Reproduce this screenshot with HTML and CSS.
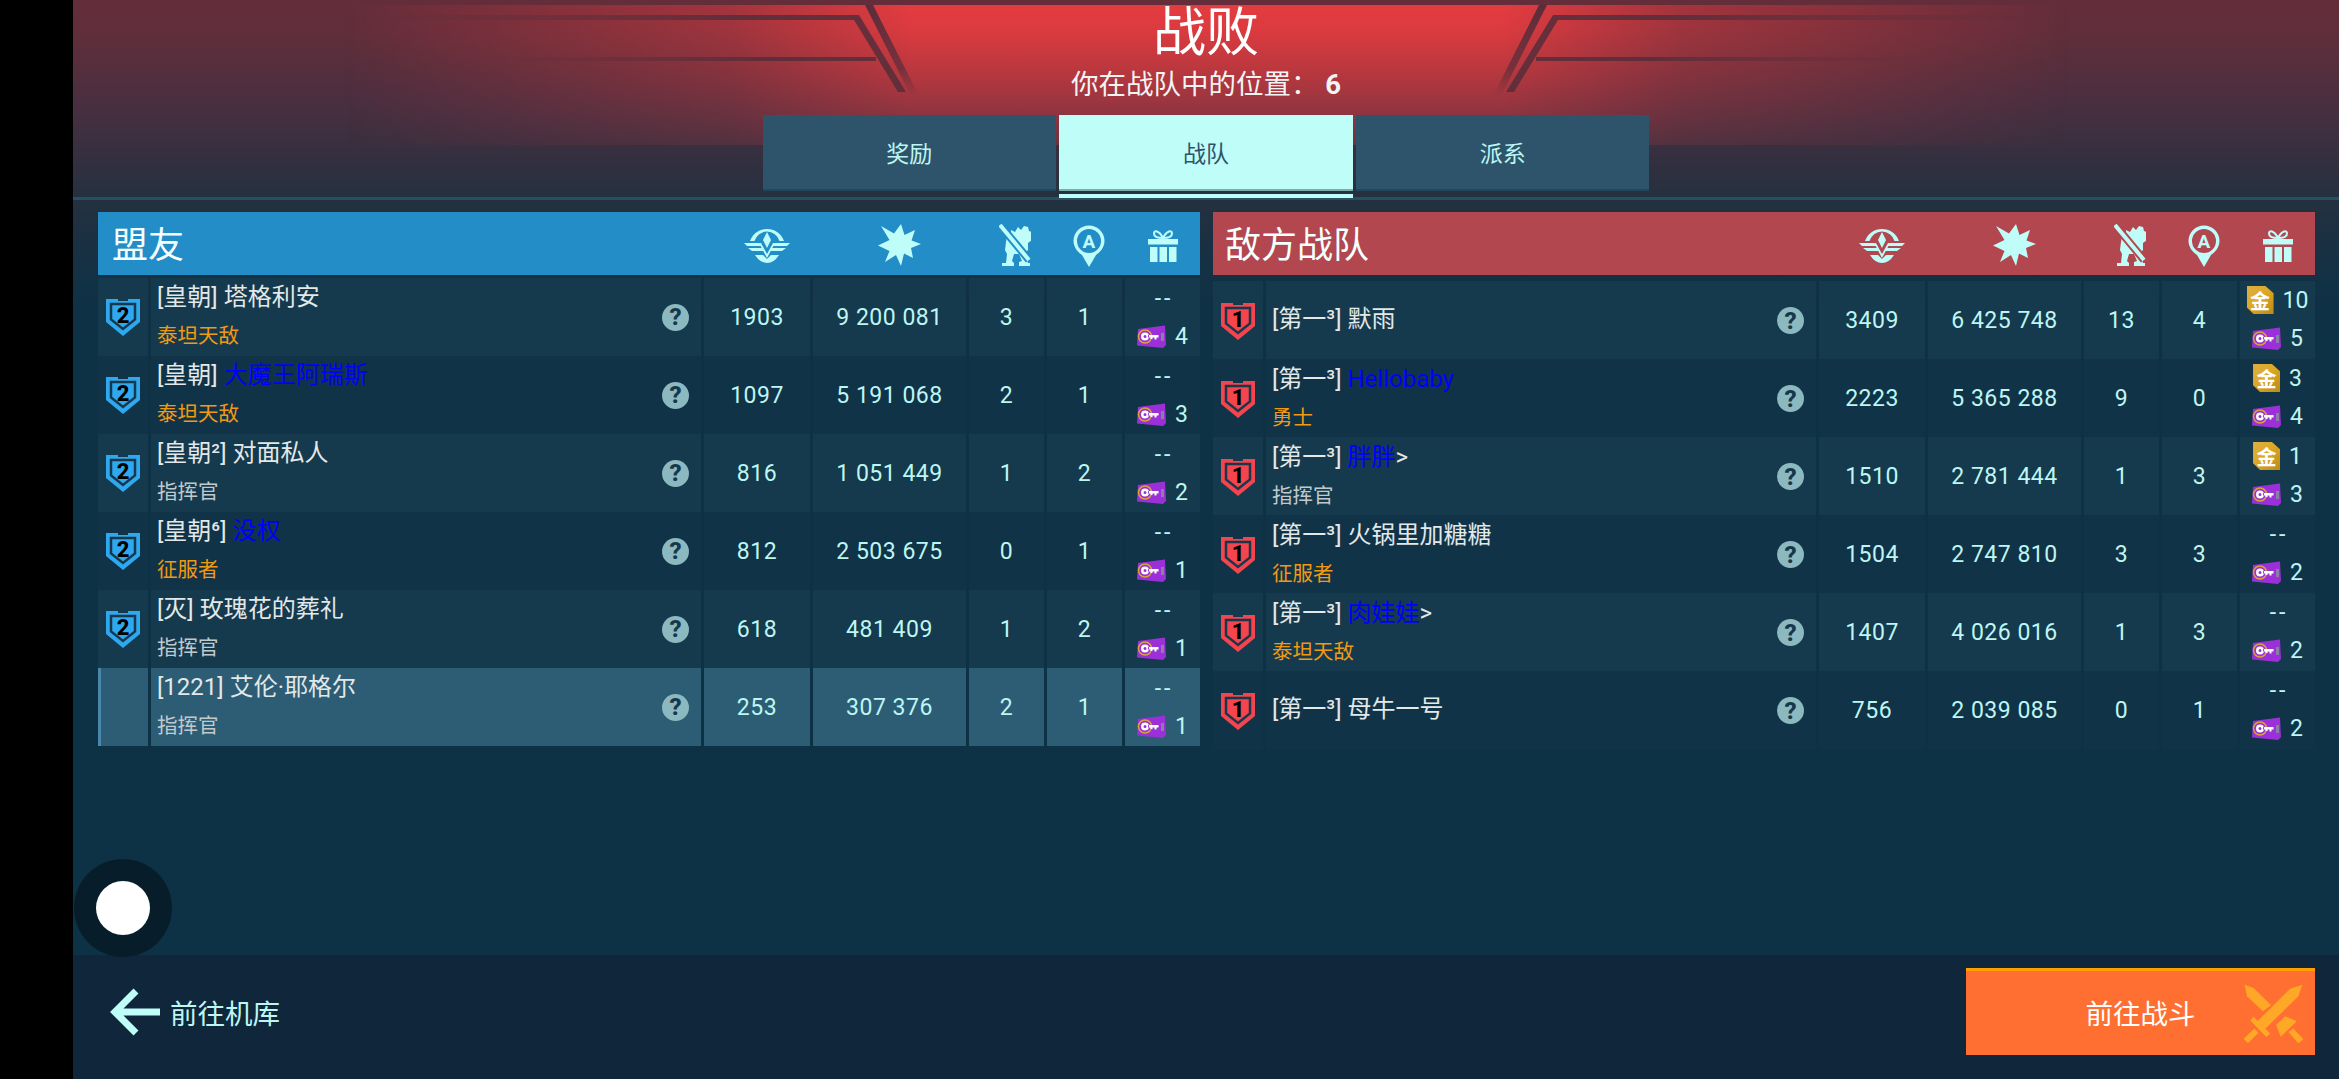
FILE: index.html
```html
<!DOCTYPE html>
<html lang="zh">
<head>
<meta charset="utf-8">
<title>战败</title>
<link rel="stylesheet" href="styles.css">
</head>
<body>
<svg class="defs" width="0" height="0" aria-hidden="true">
  <defs>
    <symbol id="i-emblem" viewBox="0 0 46 36">
      <path d="M6 14A18 18 0 0 1 40 14H35.500A13 13 0 0 0 10.500 14Z"/>
      <path d="M23 5L27 13L23 21L19 13Z"/>
      <path d="M0 16H15L18 19H3Z"/><path d="M46 16H31L28 19H43Z"/>
      <path d="M4 21H18L20 24H8Z"/><path d="M42 21H28L26 24H38Z"/>
      <path d="M17 16L23 27L29 16L31 16L23 31L15 16Z"/>
      <path d="M11 28H19L23 32L27 28H35Q30 36 23 36Q16 36 11 28Z"/>
    </symbol>
    <symbol id="i-star" viewBox="0 0 43 42">
      <path d="M23 0L26.500 11L37 6L33.500 16.500L43 20L33 24L35 34L26 29.500L23 42L18 31L7 38L11.500 27L0 21.500L11.500 16L3 2L16 9.500Z"/>
    </symbol>
    <symbol id="i-mech" viewBox="0 0 32 42">
      <path d="M12 6L16 8L19 3L22 6L25 2L29 3L30 7L33 8V16L29 19V26L26 29L28 36L29 39H31V42H20V38L23 37L20 30H15L13 37L15 39V42H3V39H7L8 30L6 26L7 18L8 12L12 10Z"/>
      <path class="slash-gap" d="M1 1L30 36"/>
      <path class="slash" d="M1 1L30 36"/>
    </symbol>
    <symbol id="i-pin" viewBox="0 0 34 43">
      <path d="M17 1.500A15.500 15.500 0 0 1 32.500 17C32.500 24 27 29 24 31L17 43L10 31C7 29 1.500 24 1.500 17A15.500 15.500 0 0 1 17 1.500ZM17 5A12 12 0 1 0 17 29A12 12 0 1 0 17 5Z" fill-rule="evenodd"/>
      <text x="17" y="23.500" class="pin-a">A</text>
    </symbol>
    <symbol id="i-gift" viewBox="0 0 30 33">
      <path class="bow" d="M15 9C10 9 6 8 6 4.500C6 1 11 1 15 9C19 1 24 1 24 4.500C24 8 20 9 15 9Z"/>
      <rect x="0" y="10" width="30" height="5.500"/>
      <rect x="2" y="18" width="7.500" height="15"/>
      <rect x="11.500" y="18" width="7.500" height="15"/>
      <rect x="21" y="18" width="7.500" height="15"/>
    </symbol>
    <symbol id="i-key" viewBox="0 0 29 23">
      <path class="key-card" d="M1 4L28 0.500L29 20L26 23L0 20.500Z"/>
      <circle class="key-ring" cx="8" cy="11.500" r="6.500"/>
      <path class="key-blade" d="M8 7.500A4 4 0 1 1 8 15.500A4 4 0 0 1 8 7.500ZM8 10A1.500 1.500 0 1 0 8 13A1.500 1.500 0 0 0 8 10Z M11 10H21.500V12.500H19.500V14.500H17.500V12.500H15.500V14H13.500V12.500H11Z" fill-rule="evenodd"/>
      <rect class="key-strip" x="24" y="8" width="3" height="8"/>
    </symbol>
    <symbol id="i-shield" viewBox="0 0 36 38">
      <path class="sh-outer" d="M1 1H13V3H23V1H35V24L18 38L1 24Z"/>
      <path class="sh-line" d="M6 6H30V21.500L18 31L6 21.500Z"/>
    </symbol>
  </defs>
</svg>

<div class="app">
  <aside class="blackbar"></aside>
  <main class="main">
    <header class="top">
      <svg class="banner" viewBox="0 0 2266 197" preserveAspectRatio="none" aria-hidden="true">
        <defs>
          <linearGradient id="redH" x1="0" x2="1" y1="0" y2="0">
            <stop offset="0.12" stop-color="#e63c40" stop-opacity="0"/>
            <stop offset="0.29" stop-color="#e63c40" stop-opacity=".5"/>
            <stop offset="0.37" stop-color="#e63c40"/>
            <stop offset="0.63" stop-color="#e63c40"/>
            <stop offset="0.71" stop-color="#e63c40" stop-opacity=".5"/>
            <stop offset="0.88" stop-color="#e63c40" stop-opacity="0"/>
          </linearGradient>
          <linearGradient id="fadeV" x1="0" x2="0" y1="0" y2="1">
            <stop offset="0" stop-color="#fff"/>
            <stop offset="0.15" stop-color="#fff" stop-opacity=".92"/>
            <stop offset="1" stop-color="#fff" stop-opacity="0"/>
          </linearGradient>
          <mask id="fadeMask"><rect width="2266" height="197" fill="url(#fadeV)"/></mask>
          <linearGradient id="lineL" x1="0" x2="1" y1="0" y2="0">
            <stop offset="0" stop-color="#552d3a" stop-opacity="0"/>
            <stop offset="0.7" stop-color="#552d3a" stop-opacity=".85"/>
          </linearGradient>
          <linearGradient id="lineR" x1="1" x2="0" y1="0" y2="0">
            <stop offset="0" stop-color="#552d3a" stop-opacity="0"/>
            <stop offset="0.7" stop-color="#552d3a" stop-opacity=".85"/>
          </linearGradient>
          <linearGradient id="diagFade" x1="0" x2="0" y1="0" y2="1">
            <stop offset="0" stop-color="#5a2d3a"/>
            <stop offset="0.7" stop-color="#5a2d3a" stop-opacity=".7"/>
            <stop offset="1" stop-color="#5a2d3a" stop-opacity="0"/>
          </linearGradient>
        </defs>
        <rect y="5" width="2266" height="140" fill="url(#redH)" mask="url(#fadeMask)"/>
        <path d="M280 15H786L833 92H825L781 20H280Z" fill="url(#lineL)"/>
        <path d="M420 57H803V61H420Z" fill="url(#lineL)"/>
        <path d="M792 5H800L846 96H838Z" fill="url(#diagFade)"/>
        <path d="M1986 15H1480L1433 92H1441L1485 20H1986Z" fill="url(#lineR)"/>
        <path d="M1846 57H1463V61H1846Z" fill="url(#lineR)"/>
        <path d="M1474 5H1466L1420 96H1428Z" fill="url(#diagFade)"/>
      </svg>
      <h1 class="title">战败</h1>
      <p class="subtitle">你在战队中的位置： <b class="place">6</b></p>
      <nav class="tabs">
        <div class="tab">奖励</div>
        <div class="tab tab-active">战队</div>
        <div class="tab">派系</div>
      </nav>
    </header>

    <section class="board">
      <div class="team team-ally">
        <div class="thead">
          <div class="thead-name">盟友</div>
          <div class="hc hc-1"><svg class="ic-emblem"><use href="#i-emblem"/></svg></div>
          <div class="hc hc-2"><svg class="ic-star"><use href="#i-star"/></svg></div>
          <div class="hc hc-3"><svg class="ic-mech"><use href="#i-mech"/></svg></div>
          <div class="hc hc-4"><svg class="ic-pin"><use href="#i-pin"/></svg></div>
          <div class="hc"><svg class="ic-gift"><use href="#i-gift"/></svg></div>
        </div>

        <div class="row">
          <div class="cell badge"><svg class="shield"><use href="#i-shield"/></svg><span class="rank">2</span></div>
          <div class="cell who"><div class="names"><div class="name">[皇朝] 塔格利安</div><div class="sub gold-t">泰坦天敌</div></div><span class="q">?</span></div>
          <div class="cell">1903</div><div class="cell">9 200 081</div><div class="cell">3</div><div class="cell">1</div>
          <div class="cell gifts"><div class="gl dash">--</div><div class="gl"><svg class="key"><use href="#i-key"/></svg>4</div></div>
        </div>
        <div class="row">
          <div class="cell badge"><svg class="shield"><use href="#i-shield"/></svg><span class="rank">2</span></div>
          <div class="cell who"><div class="names"><div class="name">[皇朝] <span class="blue">大魔王阿瑞斯</span></div><div class="sub gold-t">泰坦天敌</div></div><span class="q">?</span></div>
          <div class="cell">1097</div><div class="cell">5 191 068</div><div class="cell">2</div><div class="cell">1</div>
          <div class="cell gifts"><div class="gl dash">--</div><div class="gl"><svg class="key"><use href="#i-key"/></svg>3</div></div>
        </div>
        <div class="row">
          <div class="cell badge"><svg class="shield"><use href="#i-shield"/></svg><span class="rank">2</span></div>
          <div class="cell who"><div class="names"><div class="name">[皇朝²] 对面私人</div><div class="sub">指挥官</div></div><span class="q">?</span></div>
          <div class="cell">816</div><div class="cell">1 051 449</div><div class="cell">1</div><div class="cell">2</div>
          <div class="cell gifts"><div class="gl dash">--</div><div class="gl"><svg class="key"><use href="#i-key"/></svg>2</div></div>
        </div>
        <div class="row">
          <div class="cell badge"><svg class="shield"><use href="#i-shield"/></svg><span class="rank">2</span></div>
          <div class="cell who"><div class="names"><div class="name">[皇朝⁶] <span class="blue">没权</span></div><div class="sub gold-t">征服者</div></div><span class="q">?</span></div>
          <div class="cell">812</div><div class="cell">2 503 675</div><div class="cell">0</div><div class="cell">1</div>
          <div class="cell gifts"><div class="gl dash">--</div><div class="gl"><svg class="key"><use href="#i-key"/></svg>1</div></div>
        </div>
        <div class="row">
          <div class="cell badge"><svg class="shield"><use href="#i-shield"/></svg><span class="rank">2</span></div>
          <div class="cell who"><div class="names"><div class="name">[灭] 玫瑰花的葬礼</div><div class="sub">指挥官</div></div><span class="q">?</span></div>
          <div class="cell">618</div><div class="cell">481 409</div><div class="cell">1</div><div class="cell">2</div>
          <div class="cell gifts"><div class="gl dash">--</div><div class="gl"><svg class="key"><use href="#i-key"/></svg>1</div></div>
        </div>
        <div class="row row-me">
          <div class="cell badge"></div>
          <div class="cell who"><div class="names"><div class="name">[1221] 艾伦·耶格尔</div><div class="sub">指挥官</div></div><span class="q">?</span></div>
          <div class="cell">253</div><div class="cell">307 376</div><div class="cell">2</div><div class="cell">1</div>
          <div class="cell gifts"><div class="gl dash">--</div><div class="gl"><svg class="key"><use href="#i-key"/></svg>1</div></div>
        </div>
      </div>

      <div class="team team-enemy">
        <div class="thead">
          <div class="thead-name">敌方战队</div>
          <div class="hc hc-1"><svg class="ic-emblem"><use href="#i-emblem"/></svg></div>
          <div class="hc hc-2"><svg class="ic-star"><use href="#i-star"/></svg></div>
          <div class="hc hc-3"><svg class="ic-mech"><use href="#i-mech"/></svg></div>
          <div class="hc hc-4"><svg class="ic-pin"><use href="#i-pin"/></svg></div>
          <div class="hc"><svg class="ic-gift"><use href="#i-gift"/></svg></div>
        </div>

        <div class="row">
          <div class="cell badge"><svg class="shield"><use href="#i-shield"/></svg><span class="rank">1</span></div>
          <div class="cell who"><div class="names"><div class="name">[第一³] 默雨</div></div><span class="q">?</span></div>
          <div class="cell">3409</div><div class="cell">6 425 748</div><div class="cell">13</div><div class="cell">4</div>
          <div class="cell gifts"><div class="gl"><span class="coin">金</span>10</div><div class="gl"><svg class="key"><use href="#i-key"/></svg>5</div></div>
        </div>
        <div class="row">
          <div class="cell badge"><svg class="shield"><use href="#i-shield"/></svg><span class="rank">1</span></div>
          <div class="cell who"><div class="names"><div class="name">[第一³] <span class="blue">Hellobaby</span></div><div class="sub gold-t">勇士</div></div><span class="q">?</span></div>
          <div class="cell">2223</div><div class="cell">5 365 288</div><div class="cell">9</div><div class="cell">0</div>
          <div class="cell gifts"><div class="gl"><span class="coin">金</span>3</div><div class="gl"><svg class="key"><use href="#i-key"/></svg>4</div></div>
        </div>
        <div class="row">
          <div class="cell badge"><svg class="shield"><use href="#i-shield"/></svg><span class="rank">1</span></div>
          <div class="cell who"><div class="names"><div class="name">[第一³] <span class="blue">胖胖</span>&gt;</div><div class="sub">指挥官</div></div><span class="q">?</span></div>
          <div class="cell">1510</div><div class="cell">2 781 444</div><div class="cell">1</div><div class="cell">3</div>
          <div class="cell gifts"><div class="gl"><span class="coin">金</span>1</div><div class="gl"><svg class="key"><use href="#i-key"/></svg>3</div></div>
        </div>
        <div class="row">
          <div class="cell badge"><svg class="shield"><use href="#i-shield"/></svg><span class="rank">1</span></div>
          <div class="cell who"><div class="names"><div class="name">[第一³] 火锅里加糖糖</div><div class="sub gold-t">征服者</div></div><span class="q">?</span></div>
          <div class="cell">1504</div><div class="cell">2 747 810</div><div class="cell">3</div><div class="cell">3</div>
          <div class="cell gifts"><div class="gl dash">--</div><div class="gl"><svg class="key"><use href="#i-key"/></svg>2</div></div>
        </div>
        <div class="row">
          <div class="cell badge"><svg class="shield"><use href="#i-shield"/></svg><span class="rank">1</span></div>
          <div class="cell who"><div class="names"><div class="name">[第一³] <span class="blue">肉娃娃</span>&gt;</div><div class="sub gold-t">泰坦天敌</div></div><span class="q">?</span></div>
          <div class="cell">1407</div><div class="cell">4 026 016</div><div class="cell">1</div><div class="cell">3</div>
          <div class="cell gifts"><div class="gl dash">--</div><div class="gl"><svg class="key"><use href="#i-key"/></svg>2</div></div>
        </div>
        <div class="row">
          <div class="cell badge"><svg class="shield"><use href="#i-shield"/></svg><span class="rank">1</span></div>
          <div class="cell who"><div class="names"><div class="name">[第一³] 母牛一号</div></div><span class="q">?</span></div>
          <div class="cell">756</div><div class="cell">2 039 085</div><div class="cell">0</div><div class="cell">1</div>
          <div class="cell gifts"><div class="gl dash">--</div><div class="gl"><svg class="key"><use href="#i-key"/></svg>2</div></div>
        </div>
      </div>
    </section>

    <footer class="foot">
      <div class="back">
        <svg class="arrow" viewBox="0 0 50 48" aria-hidden="true"><path d="M26 3L5 24L26 45M5 24H50"/></svg>
        <span>前往机库</span>
      </div>
      <button class="go">
        <span class="go-label">前往战斗</span>
        <svg class="swords" viewBox="900 125 190 190" aria-hidden="true">
          <path d="M908 130L935 140L988 192L963 210L915 165Z"/>
          <path d="M1082 130L1045 142L945 242L968 265L1070 165Z"/>
          <path d="M925 238L935 227L985 277L973 288Z"/>
          <path d="M905 293L937 262L950 275L918 307Z"/>
          <path d="M1003 252L1030 225L1065 240L1017 288Z"/>
          <path d="M1040 273L1055 262L1085 295L1070 307Z"/>
        </svg>
      </button>
    </footer>

    <div class="joystick"><div class="joy-dot"></div></div>
  </main>
</div>
</body>
</html>
```
FILE: styles.css
```css
* { box-sizing: border-box; }
html, body { margin: 0; height: 100%; }
body {
  background: #000;
  font-family: "Roboto", "Noto Sans CJK SC", sans-serif;
  color: #bdf6f2;
  overflow: hidden;
}
.defs { position: absolute; }
.app { display: flex; width: 2339px; height: 1079px; }
.blackbar { width: 73px; flex: none; background: #000; }
.main {
  flex: 1;
  display: flex;
  flex-direction: column;
  position: relative;
  min-width: 0;
  background: #0d3145;
}

/* top banner */
.top {
  position: relative;
  height: 200px;
  flex: none;
  display: flex;
  flex-direction: column;
  align-items: center;
  border-bottom: 3px solid #24506a;
  background: linear-gradient(180deg, #652d3a 0%, #5f2e3b 20%, #452f40 58%, #25303f 100%);
}
.banner { position: absolute; left: 0; top: 0; width: 100%; height: 197px; }
.title {
  position: relative;
  margin: 0;
  padding-top: 3px;
  height: 60px;
  font-size: 53px;
  line-height: 60px;
  font-weight: 400;
  color: #fff;
}
.subtitle {
  position: relative;
  margin: 6px 0 0;
  height: 38px;
  font-size: 27.500px;
  line-height: 38px;
  color: #f2f4f4;
  white-space: pre;
}
.place { font-weight: 700; }
.tabs {
  position: relative;
  display: grid;
  grid-template-columns: repeat(3, 1fr);
  gap: 3px;
  width: 887px;
  height: 76px;
  margin-top: 11px;
}
.tab {
  display: flex;
  align-items: center;
  justify-content: center;
  background: #2e546c;
  border-bottom: 2px solid #23455e;
  font-size: 23px;
  color: #bdf6f2;
}
.tab-active {
  position: relative;
  background: #bffdf9;
  border-bottom-color: #7fa9ab;
  color: #2e546c;
}
.tab-active::after {
  content: "";
  position: absolute;
  left: 0;
  right: 0;
  bottom: -9px;
  height: 4px;
  background: #bffdf9;
}

/* tables */
.board {
  flex: 1;
  display: flex;
  gap: 13px;
  padding: 12px 24px 0 25px;
  background: linear-gradient(180deg, #24303f 0, #123145 80px, #0d3145 140px);
}
.team { width: 1102px; display: flex; flex-direction: column; gap: 3px; }
.team-ally { --sh: #2ea8ee; }
.team-enemy { --sh: #f4444d; }
.team-enemy .thead { margin-bottom: 3px; }
.thead, .row {
  display: grid;
  grid-template-columns: 50px 550px 106px 153px 75px 75px 75px;
  column-gap: 3px;
}
.thead { height: 63px; flex: none; color: #bffdf9; }
.team-ally .thead { --hd: #238dc8; background: #238dc8; }
.team-enemy .thead { --hd: #b2474f; background: #b2474f; }
.thead-name {
  grid-column: 1 / 3;
  padding: 3px 0 0 14px;
  font-size: 36px;
  line-height: 63px;
  color: #f4ffff;
}
.team-enemy .thead-name { padding-left: 12px; }
.hc { display: flex; align-items: center; justify-content: center; }
.hc-1, .hc-2 { padding-left: 20px; }
.hc-3 { padding-left: 16px; }
.hc-4 { padding-left: 8px; }
.hc svg { fill: #bffdf9; display: block; overflow: visible; }
.ic-emblem { width: 46px; height: 36px; }
.ic-star { width: 43px; height: 42px; }
.ic-mech { width: 32px; height: 42px; }
.ic-pin { width: 34px; height: 43px; }
.ic-gift { width: 30px; height: 33px; }
.slash { stroke: #bffdf9; stroke-width: 4; fill: none; }
.slash-gap { stroke: var(--hd); stroke-width: 8; fill: none; }
.bow { fill: none; stroke: #bffdf9; stroke-width: 2; }
.pin-a {
  font: 700 19px "Roboto", sans-serif;
  text-anchor: middle;
  fill: #bffdf9;
}

.row { height: 75px; flex: none; }
.cell {
  display: flex;
  align-items: center;
  justify-content: center;
  background: #14384c;
  font-size: 23px;
  font-weight: 400;
  letter-spacing: 0.500px;
  color: #bdf6f2;
}
.row:nth-child(odd) .cell { background: #113348; }
.row:nth-child(even) .cell { background: #15394d; }
.row.row-me .cell { background: #2c5d75; }
.row.row-me .badge { border-left: 3px solid #4a88ab; }

.badge { position: relative; }
.shield { width: 36px; height: 38px; display: block; }
.sh-outer { fill: var(--sh); }
.sh-line { fill: none; stroke: #17384c; stroke-width: 2.500; }
.rank {
  position: absolute;
  left: 0;
  right: 0;
  top: 0;
  bottom: 0;
  display: flex;
  align-items: center;
  justify-content: center;
  padding-bottom: 3px;
  font-size: 22px;
  font-weight: 800;
  color: #000;
  letter-spacing: 0;
}
.who {
  justify-content: space-between;
  padding: 0 12px 0 6px;
  letter-spacing: 0;
  font-weight: 400;
}
.names { padding-bottom: 3px; }
.name {
  line-height: 38px;
  font-size: 24px;
  color: #e3e8e8;
  white-space: nowrap;
  font-family: "Roboto", "Noto Sans CJK SC", sans-serif;
  font-weight: 400;
}
.sub {
  line-height: 37px;
  font-size: 20.500px;
  color: #c0c9cc;
  white-space: nowrap;
  font-family: "Noto Sans CJK SC", sans-serif;
}
.gold-t { color: #f09a12; }
.blue { color: #0000ff; }
.q {
  display: flex;
  align-items: center;
  justify-content: center;
  width: 27px;
  height: 27px;
  flex: none;
  border-radius: 50%;
  background: #8bb9bf;
  color: #17384c;
  font: 800 24px "Roboto", sans-serif;
}
.gifts { flex-direction: column; letter-spacing: 0; font-size: 23px; }
.team-enemy .gifts { padding-bottom: 3px; }
.gl {
  display: flex;
  align-items: center;
  justify-content: center;
  gap: 9px;
  height: 38px;
}
.dash { letter-spacing: 3px; padding-left: 3px; }
.key { width: 29px; height: 23px; display: block; }
.key-card { fill: #9b30d8; }
.key-ring { fill: none; stroke: #d9a23a; stroke-width: 1.500; }
.key-blade { fill: #fff; }
.key-strip { fill: #8a7ea8; }
.coin {
  display: flex;
  align-items: center;
  justify-content: center;
  width: 27px;
  height: 28px;
  background: linear-gradient(135deg, #dcb042 0%, #dca827 45%, #bc8a18 100%);
  clip-path: polygon(0 0, 70% 0, 100% 26%, 100% 100%, 26% 100%, 0 76%);
  color: #fff;
  font: 700 20px "Noto Sans CJK SC", sans-serif;
}

/* footer */
.foot {
  margin-top: auto;
  height: 124px;
  flex: none;
  display: flex;
  align-items: flex-start;
  justify-content: space-between;
  padding: 13px 24px 0 37px;
  background: #10263a;
}
.back {
  display: flex;
  align-items: center;
  gap: 10px;
  margin-top: 20px;
  height: 48px;
  font-size: 27.500px;
  color: #bdf6f2;
}
.arrow {
  width: 50px;
  height: 48px;
  fill: none;
  stroke: #bffdf9;
  stroke-width: 7;
  display: block;
}
.go {
  position: relative;
  display: flex;
  align-items: center;
  justify-content: center;
  width: 349px;
  height: 87px;
  padding: 0 0 3px;
  border: 0;
  border-top: 3px solid #ffa000;
  background: #ff6f31;
  color: #fff;
  font: 400 27.500px "Noto Sans CJK SC", sans-serif;
}
.go-label { display: block; }
.swords {
  position: absolute;
  right: 10px;
  top: 12px;
  width: 63px;
  height: 63px;
  fill: #ffa726;
}

/* floating overlay */
.joystick {
  position: absolute;
  left: 1px;
  top: 859px;
  width: 98px;
  height: 98px;
  border-radius: 50%;
  background: #071e2a;
  display: flex;
  align-items: center;
  justify-content: center;
}
.joy-dot { width: 54px; height: 54px; border-radius: 50%; background: #fff; }
```
